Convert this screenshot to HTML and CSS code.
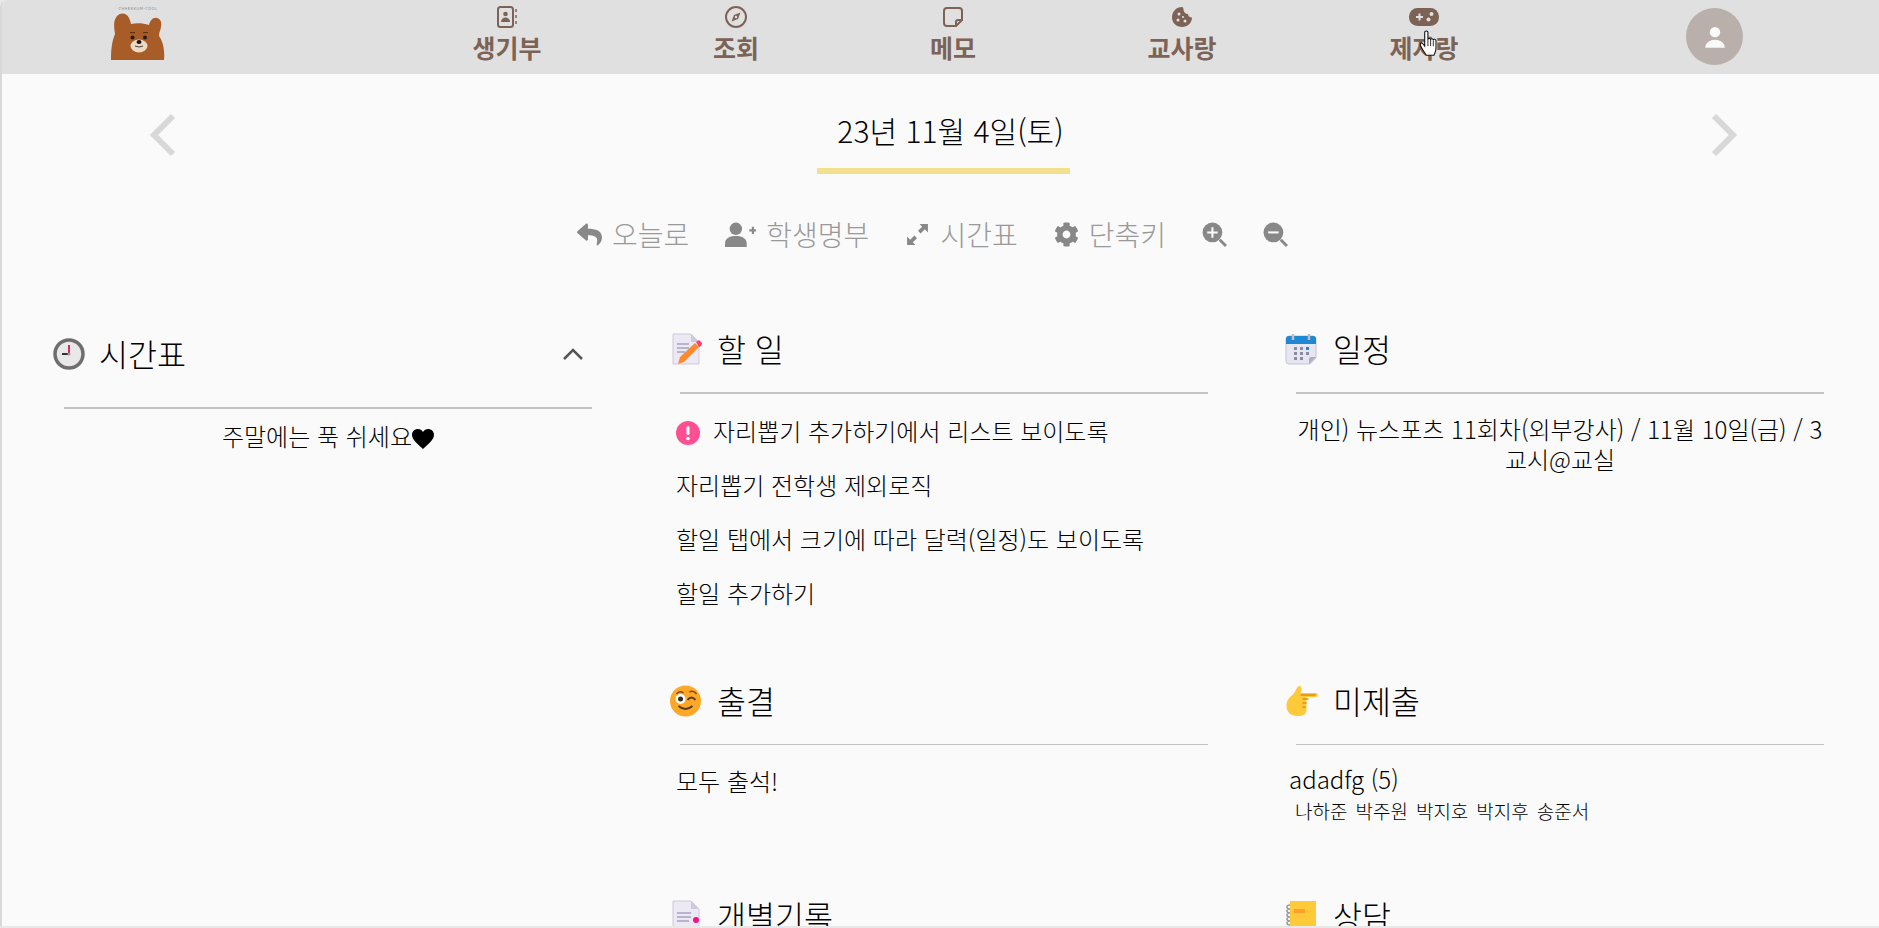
FILE: index.html
```html
<!DOCTYPE html>
<html lang="ko">
<head>
  <meta charset="UTF-8" />
  <meta name="viewport" content="width=device-width, initial-scale=1.0"/>
  <title>생기부</title>
  <link rel="stylesheet" href="styles.css">
</head>
<body>
  <div class="window">
    <header class="topbar">
      <a class="logo">
        <span class="logo-text">CHAEKKUM-COOL</span>
        <svg class="logo-bear" viewBox="0 0 54 47">
          <path d="M0 47C0 36 1 28 4 21C3 14 2 8 6 3C10-1 16 0 18 5C19 7 20 10 20 11C25 10 32 10 38 12C39 8 42 4 46 5C51 6 51 12 49 18C48 20 48 22 48 23C52 28 54 38 53 47Z" fill="#a85c28"/>
          <ellipse cx="28" cy="33" rx="8.5" ry="6.5" fill="#ecd9c6"/>
          <circle cx="21.5" cy="24.5" r="2" fill="#2a1a12"/>
          <circle cx="34" cy="24.5" r="2" fill="#2a1a12"/>
          <rect x="19" y="19" width="5" height="1.2" fill="#5e3314"/>
          <rect x="32" y="19" width="5" height="1.2" fill="#5e3314"/>
          <ellipse cx="28" cy="29" rx="2.5" ry="2" fill="#1c1210"/>
          <path d="M24 33Q28 35 32 33" fill="none" stroke="#4a3a30" stroke-width="1"/>
        </svg>
      </a>
      <nav class="menu">
        <a class="menu-item menu-1">
          <svg class="menu-icon" viewBox="0 0 24 24" fill="none" stroke="#7d6356" stroke-width="2"><rect x="3" y="2" width="15" height="20" rx="2.5"/><circle cx="10.500" cy="9" r="2.300" fill="#7d6356" stroke="none"/><path d="M6 17c0-6 9-6 9 0z" fill="#7d6356" stroke="none"/><path d="M21 4v3M21 10v3M21 16v3" stroke-width="1.500"/></svg>
          <span>생기부</span>
        </a>
        <a class="menu-item menu-2">
          <svg class="menu-icon" viewBox="0 0 24 24" fill="none" stroke="#7d6356" stroke-width="2"><circle cx="12" cy="12" r="10"/><path d="M16.500 7.500L14 14L7.500 16.500L10 10Z" fill="#7d6356" stroke="none"/><circle cx="12" cy="12" r="1.200" fill="#e0e0e0" stroke="none"/></svg>
          <span>조회</span>
        </a>
        <a class="menu-item menu-3">
          <svg class="menu-icon" viewBox="0 0 24 24" fill="none" stroke="#7d6356" stroke-width="2"><path d="M6 3h12a3 3 0 0 1 3 3v9l-6 6H6a3 3 0 0 1-3-3V6a3 3 0 0 1 3-3z"/><path d="M21 15h-4a2 2 0 0 0-2 2v4"/></svg>
          <span>메모</span>
        </a>
        <a class="menu-item menu-4">
          <svg class="menu-icon" viewBox="0 0 24 24"><path d="M12 2C6 2 2 7 2 12.500S6.500 22 12 22s10-4 10-9.500c-2.500 0-4-1.500-4-3.500-2.500 0-4.500-2-4.500-4.500C13.500 3.500 13 2 12 2z" fill="#7d6356"/><circle cx="9" cy="9" r="1.500" fill="#e0e0e0"/><circle cx="8" cy="15" r="1.500" fill="#e0e0e0"/><circle cx="15" cy="16" r="1.500" fill="#e0e0e0"/><circle cx="13" cy="12" r="1" fill="#e0e0e0"/></svg>
          <span>교사랑</span>
        </a>
        <a class="menu-item menu-5">
          <svg class="menu-icon menu-icon-wide" viewBox="0 0 32 20"><rect x="1" y="1" width="30" height="18" rx="8.500" fill="#7d6356"/><path d="M8 9h2.500V6.500h2V9H15v2h-2.500v2.500h-2V11H8z" fill="#e0e0e0"/><circle cx="23.500" cy="7" r="2" fill="#e0e0e0"/><circle cx="20.500" cy="12.500" r="2" fill="#e0e0e0"/></svg>
          <span>제자랑</span>
        </a>
      </nav>
      <div class="avatar">
        <svg viewBox="0 0 24 24" class="avatar-icon"><circle cx="12" cy="7.500" r="4.800" fill="#fafafa"/><path d="M3 22c0-10 18-10 18 0z" fill="#fafafa"/></svg>
      </div>
      <svg class="cursor" viewBox="0 0 18 26"><path d="M5 2c0-1.500 3-1.500 3 0v7c0-1.500 2.500-1.500 2.500 0 0-1.200 2.500-1.200 2.500 .3 0-1 2.500-1 2.500 .7v7c0 3-1 4-2 6.500H6.500C5 21 2 17 1 14c-.5-2 1.500-2.500 2.500-1L5 15z" fill="#fff" stroke="#111" stroke-width="1"/><path d="M8 9v6M10.500 9v6M13 9.500V15" stroke="#111" stroke-width=".8" fill="none"/></svg>
    </header>

    <section class="date-row">
      <svg class="arrow" viewBox="0 0 28 44"><path d="M24 3L5 22L24 41" fill="none" stroke="#d8d8d8" stroke-width="6"/></svg>
      <div class="date-box">
        <h2 class="date">23년 11월 4일(토)</h2>
      </div>
      <svg class="arrow" viewBox="0 0 28 44"><path d="M4 3L23 22L4 41" fill="none" stroke="#d8d8d8" stroke-width="6"/></svg>
    </section>

    <div class="toolbar">
      <a class="tool">
        <svg class="tool-icon" viewBox="0 0 512 512"><path d="M8.309 189.836L184.313 37.851C199.719 24.546 224 35.347 224 56.015v80.053c160.629 1.839 288 34.032 288 186.258 0 61.441-39.581 122.309-83.333 154.132-13.653 9.931-33.111-2.533-28.077-18.631 45.344-145.012-21.507-183.51-176.59-185.742V360c0 20.7-24.3 31.453-39.687 18.164l-176.004-152c-11.071-9.562-11.086-26.753 0-36.328z"/></svg>
        <span>오늘로</span>
      </a>
      <a class="tool">
        <svg class="tool-icon tool-icon-wide" viewBox="0 0 30 24"><circle cx="10.500" cy="6.500" r="6"/><path d="M0 24v-3c0-5 4-7.500 10.500-7.500S21 16 21 21v3z"/><path d="M23.500 7h2.500V4.500h2V7h2v2h-2v2.500h-2V9h-2.500z"/></svg>
        <span>학생명부</span>
      </a>
      <a class="tool">
        <svg class="tool-icon" viewBox="0 0 24 24"><path d="M14 2h8v8l-3-3-4 4-2.500-2.500 4-4zM10 22H2v-8l3 3 4-4 2.500 2.500-4 4z"/></svg>
        <span>시간표</span>
      </a>
      <a class="tool">
        <svg class="tool-icon" viewBox="0 0 512 512"><path d="M487.400 315.700l-42.600-24.600c4.300-23.200 4.300-47 0-70.200l42.600-24.600c4.900-2.800 7.100-8.600 5.500-14-11.100-35.600-30-67.800-54.700-94.600-3.800-4.100-10-5.100-14.800-2.300L380.800 110c-17.900-15.400-38.500-27.300-60.800-35.100V25.800c0-5.600-3.900-10.500-9.400-11.700-36.700-8.200-74.300-7.800-109.200 0-5.500 1.200-9.400 6.100-9.400 11.700V75c-22.200 7.900-42.800 19.800-60.800 35.100L88.700 85.500c-4.900-2.800-11-1.900-14.800 2.300-24.700 26.700-43.600 58.900-54.700 94.600-1.700 5.400.6 11.200 5.500 14L67.300 221c-4.300 23.200-4.300 47 0 70.200l-42.600 24.600c-4.900 2.800-7.100 8.600-5.500 14 11.100 35.600 30 67.800 54.700 94.600 3.800 4.100 10 5.100 14.800 2.300l42.600-24.600c17.900 15.400 38.500 27.300 60.800 35.100v49.200c0 5.600 3.900 10.500 9.400 11.700 36.700 8.200 74.300 7.800 109.200 0 5.500-1.200 9.400-6.100 9.400-11.700v-49.200c22.200-7.900 42.800-19.800 60.800-35.100l42.600 24.600c4.900 2.800 11 1.900 14.800-2.300 24.700-26.700 43.600-58.900 54.700-94.600 1.500-5.500-.7-11.300-5.600-14.100zM256 336c-44.100 0-80-35.900-80-80s35.900-80 80-80 80 35.900 80 80-35.900 80-80 80z"/></svg>
        <span>단축키</span>
      </a>
      <a class="tool">
        <svg class="tool-icon" viewBox="0 0 24 24"><circle cx="10" cy="10" r="9.500"/><path d="M16 18l2-2 6 6-2 2z"/><path d="M9 5h2v4h4v2h-4v4H9v-4H5V9h4z" fill="#fafafa"/></svg>
      </a>
      <a class="tool">
        <svg class="tool-icon" viewBox="0 0 24 24"><circle cx="10" cy="10" r="9.500"/><path d="M16 18l2-2 6 6-2 2z"/><path d="M5 9h10v2H5z" fill="#fafafa"/></svg>
      </a>
    </div>

    <main class="dashboard">
      <section class="panel panel-side">
        <div class="panel-head">
          <svg class="panel-icon" viewBox="0 0 32 32"><circle cx="16" cy="16" r="14" fill="#e8e8e8" stroke="#6e6e6e" stroke-width="3.500"/><path d="M16 7v9" stroke="#e0245e" stroke-width="2"/><path d="M9 16h7" stroke="#333" stroke-width="2"/><circle cx="16" cy="16" r="1.500" fill="#999"/></svg>
          <h3>시간표</h3>
          <svg class="chevron" viewBox="0 0 24 14"><path d="M3 12L12 3L21 12" fill="none" stroke="#555" stroke-width="2.500"/></svg>
        </div>
        <div class="panel-body center weekend">주말에는 푹 쉬세요<svg class="heart" viewBox="0 0 22 20"><path d="M11 20C6 15 0 11 0 6C0 2 3 0 6 0C8 0 10 1 11 3C12 1 14 0 16 0C19 0 22 2 22 6C22 11 16 15 11 20Z"/></svg></div>
      </section>

      <div class="board">
        <section class="panel panel-tall">
          <div class="panel-head">
            <svg class="panel-icon" viewBox="0 0 32 32"><path d="M2 1h18l8 8v22H2z" fill="#ece8f4" stroke="#cfc9dc"/><path d="M20 1v8h8z" fill="#cfc9dc"/><path d="M6 11h12M6 15h12M6 19h8" stroke="#a8a1bd" stroke-width="1.500"/><path d="M9 24L24 10l4 4L13 29l-6 2z" fill="#ff8a2b"/><path d="M25 9l3-2 3 3-1 3-2 1z" fill="#ff3d6e"/></svg>
            <h3>할 일</h3>
          </div>
          <ul class="todo-list">
            <li class="todo-item">
              <svg class="alert" viewBox="0 0 24 24"><circle cx="12" cy="12" r="12" fill="#ff4f93"/><rect x="10.500" y="5" width="3" height="9" rx="1.500" fill="#fff"/><circle cx="12" cy="17.500" r="1.800" fill="#fff"/></svg>
              자리뽑기 추가하기에서 리스트 보이도록
            </li>
            <li class="todo-item">자리뽑기 전학생 제외로직</li>
            <li class="todo-item">할일 탭에서 크기에 따라 달력(일정)도 보이도록</li>
            <li class="todo-item">할일 추가하기</li>
          </ul>
        </section>

        <section class="panel panel-tall">
          <div class="panel-head">
            <svg class="panel-icon" viewBox="0 0 32 32"><path d="M1 6a3 3 0 0 1 3-3h24a3 3 0 0 1 3 3v19l-6 6H4a3 3 0 0 1-3-3z" fill="#e6e6f0" stroke="#c5c3d6"/><path d="M1 11V6a3 3 0 0 1 3-3h24a3 3 0 0 1 3 3v5z" fill="#1e88d2"/><path d="M8 1v6M24 1v6" stroke="#c0bdcf" stroke-width="2.500"/><path d="M9 14h3v3H9zM15 14h3v3h-3zM9 19h3v3H9zM15 19h3v3h-3zM21 19h3v3h-3zM9 24h3v3H9zM15 24h3v3h-3z" fill="#8d89a3"/><path d="M21 14h3v3h-3z" fill="#1e88d2"/><path d="M31 24l-7 7v-5a2 2 0 0 1 2-2z" fill="#b0adc0"/></svg>
            <h3>일정</h3>
          </div>
          <div class="panel-body center schedule">개인) 뉴스포츠 11회차(외부강사) / 11월 10일(금) / 3교시@교실</div>
        </section>

        <section class="panel panel-short">
          <div class="panel-head">
            <svg class="panel-icon panel-icon-big" viewBox="0 0 32 32"><circle cx="16" cy="16" r="15.500" fill="#ffa726"/><path d="M7 9Q10 5 14 8M20 7Q24 5 27 9" fill="none" stroke="#7a4a12" stroke-width="1.500"/><circle cx="11" cy="14" r="5" fill="#fff"/><circle cx="11" cy="14" r="2.500" fill="#3a2a20"/><path d="M18 15Q22 10 26 15" fill="none" stroke="#5a3a18" stroke-width="2"/><path d="M9 21Q16 27 23 21" fill="none" stroke="#5a3a18" stroke-width="2"/></svg>
            <h3>출결</h3>
          </div>
          <div class="panel-body plain">모두 출석!</div>
        </section>

        <section class="panel panel-short">
          <div class="panel-head">
            <svg class="panel-icon panel-icon-hand" viewBox="0 0 34 32"><path d="M1 21c0-6 3-9 7-12l4-7c2-2 5-1 4 3l-1 3h15c3 0 3 4 0 4h-9v13c0 4-3 6-9 6-7 0-11-4-11-10z" fill="#ffca3a"/><path d="M15 10h15M17 14h6M17 18h4M17 22h3" stroke="#e08e10" stroke-width="1.500"/></svg>
            <h3>미제출</h3>
          </div>
          <div class="missing">
            <div class="missing-title">adadfg (5)</div>
            <div class="missing-names">
              <span>나하준</span><span>박주원</span><span>박지호</span><span>박지후</span><span>송준서</span>
            </div>
          </div>
        </section>

        <section class="panel">
          <div class="panel-head">
            <svg class="panel-icon" viewBox="0 0 32 32"><path d="M2 1h18l8 8v22H2z" fill="#ece8f4" stroke="#cfc9dc"/><path d="M20 1v8h8z" fill="#cfc9dc"/><path d="M6 13h14M6 17h14M6 21h12" stroke="#a8a1bd" stroke-width="1.500"/><circle cx="25" cy="20" r="3" fill="#f0148c"/></svg>
            <h3>개별기록</h3>
          </div>
        </section>

        <section class="panel">
          <div class="panel-head">
            <svg class="panel-icon" viewBox="0 0 32 32"><rect x="5" y="1" width="26" height="30" fill="#ffca3a"/><rect x="9" y="9" width="11" height="4" fill="#ff9f2a"/><path d="M5 5a3 2 0 1 0 0 4a3 2 0 1 0 0 4a3 2 0 1 0 0 4a3 2 0 1 0 0 4a3 2 0 1 0 0 4" fill="none" stroke="#999" stroke-width="1.500"/></svg>
            <h3>상담</h3>
          </div>
        </section>
      </div>
    </main>
  </div>
</body>
</html>
```

FILE: styles.css
```css
* {
  box-sizing: border-box;
}
html, body {
  margin: 0;
  height: 100%;
  overflow: hidden;
}
body {
  font-family: "Noto Sans CJK KR", "Noto Sans", sans-serif;
  font-weight: 300;
  color: #000;
  background-color: #e8e8e8;
}
.window {
  position: relative;
  height: 926px;
  overflow: hidden;
  background-color: #fafafa;
  border-left: 2px solid #d8d8d8;
  border-top-left-radius: 8px;
}

/* top menu */
.topbar {
  display: flex;
  height: 74px;
  background-color: #e0e0e0;
}
.logo {
  display: flex;
  flex-direction: column;
  align-items: center;
  width: 54px;
  margin-left: 109px;
  padding-top: 5px;
}
.logo-text {
  font-size: 4px;
  line-height: 6px;
  letter-spacing: 0.5px;
  color: #555;
  white-space: nowrap;
}
.logo-bear {
  width: 54px;
  height: 47px;
  margin-top: 2px;
}
.menu {
  display: flex;
  margin-left: 282px;
}
.menu-item {
  display: flex;
  flex-direction: column;
  align-items: center;
  width: 120px;
  padding-top: 5px;
  color: #7d6356;
  font-size: 25px;
  font-weight: 700;
  line-height: 36px;
}
.menu-1 { margin-right: 109px; }
.menu-2 { margin-right: 97px; }
.menu-3 { margin-right: 109px; }
.menu-4 { margin-right: 122px; }
.menu-icon {
  width: 24px;
  height: 24px;
}
.menu-icon-wide {
  width: 32px;
}
.avatar {
  display: flex;
  align-items: center;
  justify-content: center;
  width: 57px;
  height: 57px;
  margin: 8px 0 0 202px;
  border-radius: 50%;
  background-color: #b9b0ab;
}
.avatar-icon {
  width: 26px;
  height: 26px;
}
.cursor {
  position: absolute;
  top: 30px;
  left: 1417px;
  width: 20px;
  height: 28px;
}

/* date */
.date-row {
  display: flex;
  align-items: flex-start;
  justify-content: space-between;
  padding: 40px 141px 0 147px;
}
.arrow {
  width: 28px;
  height: 44px;
  margin-top: -1px;
}
.date-box {
  width: 253px;
  height: 64px;
  margin-top: -4px;
  padding-left: 14px;
  border-bottom: 6px solid #f3e08f;
  text-align: center;
}
.date {
  margin: 0;
  font-size: 30px;
  font-weight: 300;
  line-height: 40px;
  white-space: nowrap;
}

/* tools under the date */
.toolbar {
  display: flex;
  align-items: center;
  justify-content: center;
  gap: 36px;
  height: 36px;
  margin-top: 42px;
  padding-right: 16px;
  color: #999;
  font-size: 28px;
  line-height: 36px;
}
.tool {
  display: flex;
  align-items: center;
  gap: 10px;
}
.tool-icon {
  width: 25px;
  height: 25px;
  fill: #888;
}
.tool-icon-wide {
  width: 31px;
}

/* panels */
.dashboard {
  display: grid;
  grid-template-columns: 576px 1192px;
  column-gap: 40px;
  margin-top: 69px;
  padding-left: 38px;
}
.board {
  display: grid;
  grid-template-columns: 576px 576px;
  grid-auto-rows: max-content;
  column-gap: 40px;
}
.panel-side {
  padding-top: 5px;
}
.panel-tall {
  height: 352px;
}
.panel-short {
  height: 215px;
}
.panel-head {
  display: flex;
  align-items: center;
  height: 56px;
  margin: 0 0 15px;
  padding: 0 16px 0 15px;
}
.board .panel:nth-child(even) .panel-head {
  padding-left: 13px;
}
.panel-side .panel-head {
  margin-bottom: 25px;
  padding: 0 31px 0 13px;
}
.panel-head h3 {
  flex: 1;
  margin: -2px 0 0 14px;
  font-size: 31.500px;
  font-weight: 300;
  line-height: 44px;
}
.board .panel:nth-child(even) .panel-head h3 {
  margin-left: 16px;
}
.panel-icon {
  flex: none;
  width: 32px;
  height: 32px;
}
.panel-icon-big {
  width: 35px;
  margin-left: -3px;
}
.panel-icon-hand {
  width: 35px;
  margin-right: -3px;
}
.chevron {
  width: 24px;
  height: 14px;
}
.panel-body {
  margin: 0 24px;
  padding-top: 2px;
  border-top: 2px solid #c4c4c4;
  font-size: 24px;
  line-height: 32px;
}
.panel-short .panel-body,
.panel-short .missing {
  border-top-width: 1px;
}
.center {
  text-align: center;
}
.weekend {
  padding-top: 11px;
}
.heart {
  width: 22px;
  height: 20px;
  vertical-align: -3px;
}
.schedule {
  position: relative;
  margin: 0;
  padding: 22px 22px 0;
  border-top: 0;
  line-height: 30px;
}
.schedule::before {
  content: "";
  position: absolute;
  top: 0;
  left: 24px;
  right: 24px;
  border-top: 2px solid #c4c4c4;
}
.plain {
  padding: 20px 0 0 0;
  text-indent: -4px;
}
.todo-list {
  margin: 0 24px;
  padding: 10px 0 0;
  border-top: 2px solid #c4c4c4;
  list-style: none;
  font-size: 24px;
  line-height: 32px;
}
.todo-item {
  display: flex;
  align-items: center;
  height: 54px;
  margin-left: -4px;
}
.alert {
  width: 24px;
  height: 24px;
  margin-right: 13px;
  transform: translateY(2px);
}
.missing {
  margin: 0 24px;
  padding-top: 18px;
  border-top: 1px solid #c4c4c4;
}
.missing-title {
  margin-left: -7px;
  font-size: 24px;
  line-height: 32px;
}
.missing-names {
  display: flex;
  gap: 8px;
  margin: 2px 0 0 -1px;
  font-size: 19px;
  line-height: 28px;
}
```
